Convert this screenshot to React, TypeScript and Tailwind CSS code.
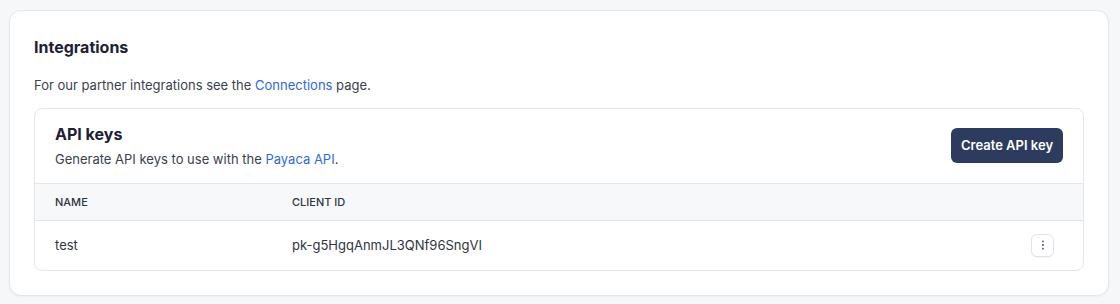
import React from 'react';

const Kebab = () => (
  <svg width="10" height="12" viewBox="0 0 10 12" fill="currentColor">
    <rect x="4.3" y="1.5" width="1.4" height="1.8" rx="0.5" />
    <rect x="4.3" y="5.1" width="1.4" height="1.8" rx="0.5" />
    <rect x="4.3" y="8.7" width="1.4" height="1.8" rx="0.5" />
  </svg>
);

const App = () => {
  const keys = [{ name: 'test', clientId: 'pk-g5HgqAnmJL3QNf96SngVI' }];

  return (
    <div className="min-h-[304px] bg-[#f6f7f9] pt-[10px] pl-[9px] pr-[11px] font-['Inter',sans-serif] text-[#1f2433]">
      <div className="rounded-xl border border-[#e4e6ea] bg-white px-6 pt-6 pb-6 shadow-[0_1px_2px_rgba(0,0,0,0.04)]">
        <h2 className="text-base leading-6 font-bold text-[#1c2133]">Integrations</h2>
        <p className="mt-4 text-[13px] leading-5 text-[#3a3f4c]">
          For our partner integrations see the{' '}
          <a className="text-[#2f6ad9]">Connections</a> page.
        </p>

        {/* API keys card */}
        <div className="mt-[13px] overflow-hidden rounded-lg border border-[#e4e6ea]">
          <div className="flex items-center justify-between px-5 pt-[13px] pb-[14px]">
            <div>
              <h3 className="text-base leading-6 font-bold text-[#1c2133]">API keys</h3>
              <p className="mt-[3px] text-[13px] leading-5 text-[#3a3f4c]">
                Generate API keys to use with the{' '}
                <a className="text-[#2f6ad9]">Payaca API</a>.
              </p>
            </div>
            <button className="h-[35px] w-[112px] rounded-md bg-[#2d3b5e] text-[13px] font-semibold text-white">
              Create API key
            </button>
          </div>

          <table className="w-full border-t border-[#e4e6ea] text-left">
            <thead>
              <tr className="bg-[#f7f8fa] border-b border-[#e4e6ea]">
                <th className="w-[237px] h-[37px] px-5 text-[11px] font-medium uppercase text-[#2f3442]">Name</th>
                <th className="h-[37px] px-5 text-[11px] font-medium uppercase text-[#2f3442]">Client ID</th>
                <th className="h-[37px] px-5"></th>
              </tr>
            </thead>
            <tbody>
              {keys.map((k) => (
                <tr key={k.clientId}>
                  <td className="h-[49px] px-5 text-[13px] text-[#2f3442]">{k.name}</td>
                  <td className="h-[49px] px-5 text-[13px] text-[#2f3442]">{k.clientId}</td>
                  <td className="h-[49px] pr-[29px] text-right">
                    <button className="inline-flex h-[23px] w-[23px] items-center justify-center rounded-md border border-[#e1e3e8] bg-white text-[#2d3b5e] shadow-[0_1px_1px_rgba(0,0,0,0.04)]">
                      <Kebab />
                    </button>
                  </td>
                </tr>
              ))}
            </tbody>
          </table>
        </div>
      </div>
    </div>
  );
};

export default App;
